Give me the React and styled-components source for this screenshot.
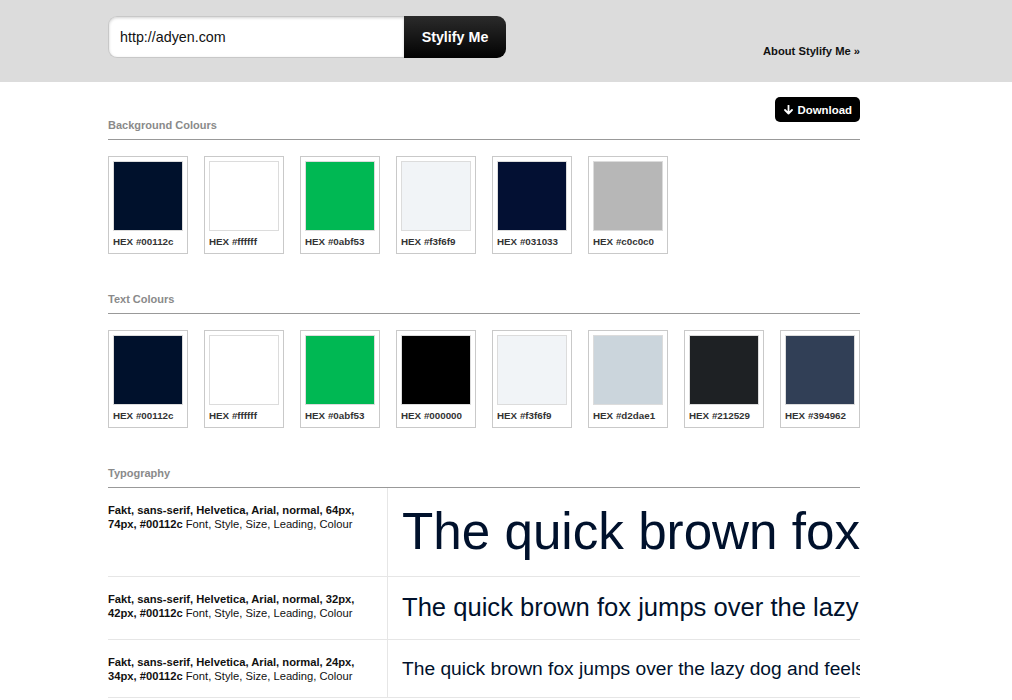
import React from "react";
import styled, { createGlobalStyle } from "styled-components";

const Global = createGlobalStyle`
  html, body { margin: 0; padding: 0; background: #fff; }
  body { font-family: "Liberation Sans", Arial, Helvetica, sans-serif; color: #111; }
  * { box-sizing: border-box; }
`;

const Header = styled.header`
  height: 82px;
  background: #dcdcdc;
`;

const HeaderInner = styled.div`
  width: 752px;
  margin-left: 108px;
  padding-top: 16px;
  display: flex;
  justify-content: space-between;
  align-items: flex-start;
`;

const SearchForm = styled.form`
  display: flex;
  height: 42px;
`;

const UrlInput = styled.input`
  width: 296px;
  height: 42px;
  border: 1px solid #c8c8c8;
  border-right: none;
  border-radius: 9px 0 0 9px;
  background: #fff;
  box-shadow: inset 0 1px 3px rgba(0, 0, 0, 0.18);
  padding: 0 0 0 11px;
  font-family: "Liberation Sans", Arial, sans-serif;
  font-size: 14.3px;
  color: #111;
  outline: none;
`;

const GoButton = styled.button`
  width: 102px;
  height: 42px;
  border: none;
  border-radius: 0 9px 9px 0;
  background: linear-gradient(#2b2b2b, #020202);
  color: #fff;
  font-family: "Liberation Sans", Arial, sans-serif;
  font-weight: bold;
  font-size: 14.3px;
  padding: 0;
`;

const AboutLink = styled.a`
  margin-top: 28px;
  font-size: 11.2px;
  line-height: 14px;
  font-weight: bold;
  color: #111;
  text-decoration: none;
`;

const Main = styled.main`
  width: 752px;
  margin-left: 108px;
`;

const Section = styled.section`
  margin-top: ${(p) => p.$top}px;
`;

const SectionHead = styled.div`
  display: flex;
  justify-content: space-between;
  align-items: flex-end;
  border-bottom: 1px solid #999;
  height: ${(p) => p.$height}px;
`;

const Label = styled.h2`
  margin: 0 0 7px;
  font-size: 11px;
  line-height: 13px;
  font-weight: bold;
  color: #8a8a8a;
`;

const DownloadButton = styled.button`
  align-self: flex-start;
  display: flex;
  align-items: center;
  gap: 5px;
  height: 25px;
  padding: 0 8px 0 9px;
  border: none;
  border-radius: 5px;
  background: #000;
  color: #fff;
  font-family: "Liberation Sans", Arial, sans-serif;
  font-weight: bold;
  font-size: 11.4px;
`;

const SwatchRow = styled.div`
  display: flex;
  gap: 16px;
  margin-top: 16px;
`;

const Swatch = styled.div`
  width: 80px;
  border: 1px solid #c9c9c9;
  padding: 4px 4px 0;
`;

const Chip = styled.div`
  width: 70px;
  height: 70px;
  border: 1px solid #dcdcdc;
  background: ${(p) => p.$c};
`;

const HexText = styled.div`
  font-size: 9.8px;
  line-height: 12px;
  font-weight: bold;
  color: #333;
  padding: 5px 0 5px;
  white-space: nowrap;
`;

const TypeRow = styled.div`
  display: flex;
  border-bottom: 1px solid #e6e6e6;
`;

const TypeInfo = styled.div`
  width: 280px;
  flex: none;
  border-right: 1px solid #e6e6e6;
  padding: 15px 28px 14px 0;
  font-size: 11.2px;
  line-height: 14px;
  color: #111;
  b { font-weight: bold; }
`;

const TypeSample = styled.div`
  flex: 1;
  min-width: 0;
  overflow: hidden;
  white-space: nowrap;
  padding: 14.4px 0 14.4px 14px;
  color: #00112c;
  font-size: ${(p) => p.$size}px;
  line-height: ${(p) => p.$lh}px;
`;

const bg = ["#00112c", "#ffffff", "#0abf53", "#f3f6f9", "#031033", "#c0c0c0"];
const bgShown = ["#00112c", "#ffffff", "#00b853", "#f1f4f7", "#031033", "#b7b7b7"];
const txt = ["#00112c", "#ffffff", "#0abf53", "#000000", "#f3f6f9", "#d2dae1", "#212529", "#394962"];
const txtShown = ["#00112c", "#ffffff", "#00b853", "#000000", "#f1f4f7", "#cbd5dc", "#1e2124", "#313f56"];

const types = [
  { size: 51.2, lh: 59.2, px: "64px", lead: "74px", text: "The quick brown fox jumps over the lazy dog" },
  { size: 25.6, lh: 33.6, px: "32px", lead: "42px", text: "The quick brown fox jumps over the lazy dog" },
  { size: 19.2, lh: 27.2, px: "24px", lead: "34px", text: "The quick brown fox jumps over the lazy dog and feels as if he were in the seventh heaven" },
];

const ArrowDown = () => (
  <svg width="9" height="10" viewBox="0 0 9 10" aria-hidden="true">
    <path d="M4.5 0.5 V8.5 M1 5 L4.5 8.6 L8 5" stroke="#fff" strokeWidth="1.8" fill="none" strokeLinecap="round" strokeLinejoin="round" />
  </svg>
);

function Swatches({ codes, shown }) {
  return (
    <SwatchRow>
      {codes.map((c, i) => (
        <Swatch key={i}>
          <Chip $c={shown[i]} />
          <HexText>HEX {c}</HexText>
        </Swatch>
      ))}
    </SwatchRow>
  );
}

export default function App() {
  return (
    <>
      <Global />
      <Header>
        <HeaderInner>
          <SearchForm onSubmit={(e) => e.preventDefault()}>
            <UrlInput defaultValue="http://adyen.com" />
            <GoButton type="submit">Stylify Me</GoButton>
          </SearchForm>
          <AboutLink href="#">About Stylify Me »</AboutLink>
        </HeaderInner>
      </Header>
      <Main>
        <Section $top={15}>
          <SectionHead $height={43}>
            <Label>Background Colours</Label>
            <DownloadButton>
              <ArrowDown />
              Download
            </DownloadButton>
          </SectionHead>
          <Swatches codes={bg} shown={bgShown} />
        </Section>
        <Section $top={39}>
          <SectionHead $height={21}>
            <Label>Text Colours</Label>
          </SectionHead>
          <Swatches codes={txt} shown={txtShown} />
        </Section>
        <Section $top={39}>
          <SectionHead $height={21}>
            <Label>Typography</Label>
          </SectionHead>
          {types.map((t, i) => (
            <TypeRow key={i}>
              <TypeInfo>
                <b>
                  Fakt, sans-serif, Helvetica, Arial, normal, {t.px}, {t.lead}, #00112c
                </b>{" "}
                Font, Style, Size, Leading, Colour
              </TypeInfo>
              <TypeSample $size={t.size} $lh={t.lh}>
                {t.text}
              </TypeSample>
            </TypeRow>
          ))}
        </Section>
      </Main>
    </>
  );
}
